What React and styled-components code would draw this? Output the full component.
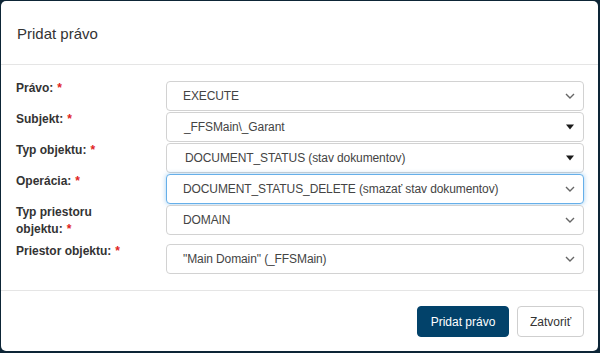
import React from "react";
import styled, { createGlobalStyle, css } from "styled-components";

const Global = createGlobalStyle`
  html, body { margin: 0; padding: 0; }
  body {
    background: #0d2536;
    font-family: "Liberation Sans", Arial, sans-serif;
    width: 600px;
    height: 353px;
    overflow: hidden;
  }
`;

const Modal = styled.div`
  margin: 1px 2px 0 1px;
  width: 597px;
  height: 350px;
  background: #fff;
  border-radius: 5px;
  display: flex;
  flex-direction: column;
  box-sizing: border-box;
  overflow: hidden;
`;

const Header = styled.div`
  height: 64px;
  box-sizing: border-box;
  padding: 0 16px;
  display: flex;
  align-items: center;
  border-bottom: 1px solid #e5e5e5;
`;

const Title = styled.h4`
  margin: 0;
  font-size: 15px;
  font-weight: normal;
  color: #333;
  padding-top: 1px;
`;

const Body = styled.div`
  padding: 16px 14px 16px 15px;
  display: flex;
  flex-direction: column;
  gap: 1px;
  border-bottom: 1px solid #e5e5e5;
`;

const Row = styled.div`
  display: grid;
  grid-template-columns: 150px 1fr;
  min-height: ${(p) => (p.$tall ? 38 : 30)}px;
  align-items: start;
`;

const Label = styled.label`
  display: flex;
  flex-direction: column;
  font-size: 12px;
  font-weight: bold;
  color: #333;
  line-height: 17px;
  margin-top: -1px;
`;

const LabelLine = styled.span`
  display: block;
  white-space: nowrap;
`;

const Req = styled.span`
  color: #e0231c;
  margin-left: 4px;
`;

const Select = styled.div`
  height: 30px;
  box-sizing: border-box;
  border: 1px solid #d2d2d2;
  border-radius: 4px;
  display: flex;
  align-items: center;
  justify-content: space-between;
  padding: 0 8px 0 ${(p) => p.$pad || 16}px;
  font-size: 12px;
  color: #444;
  background: #fff;
  ${(p) =>
    p.$focus &&
    css`
      border-color: #66afe9;
      box-shadow: 0 0 5px rgba(102, 175, 233, 0.6);
    `}
`;

const Value = styled.span`
  white-space: nowrap;
  letter-spacing: -0.1px;
`;

const Footer = styled.div`
  flex: 1;
  display: flex;
  justify-content: flex-end;
  align-items: flex-start;
  padding: 15px 14px 0 0;
  gap: 8px;
`;

const Button = styled.button`
  height: 31px;
  box-sizing: border-box;
  border-radius: 4px;
  font-family: "Liberation Sans", Arial, sans-serif;
  font-size: 12px;
  padding: 0 12px;
  cursor: pointer;
  ${(p) =>
    p.$primary
      ? css`
          background: #02426a;
          border: 1px solid #02426a;
          color: #fff;
          width: 92px;
        `
      : css`
          background: #fff;
          border: 1px solid #cfcfcf;
          color: #333;
          width: 67px;
        `}
`;

const Chevron = () => (
  <svg width="10" height="6" viewBox="0 0 10 6">
    <polyline points="1,1 5,5 9,1" fill="none" stroke="#666" strokeWidth="1.4" />
  </svg>
);

const Caret = () => (
  <svg width="10" height="6" viewBox="0 0 10 6">
    <polygon points="1,0.5 9,0.5 5,5.5" fill="#1a1a1a" />
  </svg>
);

const rows = [
  { label: ["Právo:"], value: "EXECUTE", icon: "chevron" },
  { label: ["Subjekt:"], value: "_FFSMain\\_Garant", icon: "caret", pad: 17 },
  { label: ["Typ objektu:"], value: "DOCUMENT_STATUS (stav dokumentov)", icon: "caret", pad: 18 },
  { label: ["Operácia:"], value: "DOCUMENT_STATUS_DELETE (smazať stav dokumentov)", icon: "chevron", focus: true },
  { label: ["Typ priestoru", "objektu:"], value: "DOMAIN", icon: "chevron", tall: true },
  { label: ["Priestor objektu:"], value: "\"Main Domain\" (_FFSMain)", icon: "chevron" },
];

export default function App() {
  return (
    <>
      <Global />
      <Modal>
        <Header>
          <Title>Pridat právo</Title>
        </Header>
        <Body>
          {rows.map((r) => (
            <Row key={r.value} $tall={r.tall}>
              <Label>
                {r.label.map((line, i) => (
                  <LabelLine key={line}>
                    {line}
                    {i === r.label.length - 1 && <Req>*</Req>}
                  </LabelLine>
                ))}
              </Label>
              <Select $focus={r.focus} $pad={r.pad}>
                <Value>{r.value}</Value>
                {r.icon === "caret" ? <Caret /> : <Chevron />}
              </Select>
            </Row>
          ))}
        </Body>
        <Footer>
          <Button $primary>Pridat právo</Button>
          <Button>Zatvoriť</Button>
        </Footer>
      </Modal>
    </>
  );
}
